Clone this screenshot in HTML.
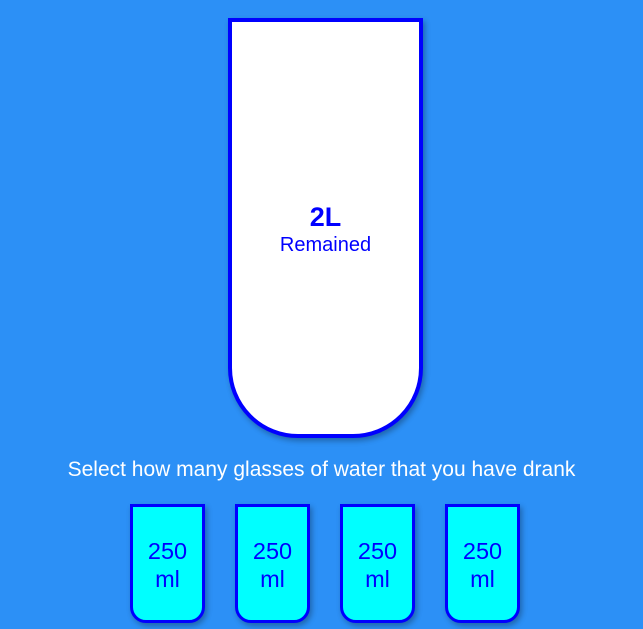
<!DOCTYPE html>
<html><head><style>
html,body{margin:0;padding:0}
body{width:643px;height:629px;background:#2c90f6;font-family:"Liberation Sans",Arial,sans-serif;position:relative;overflow:hidden}
.big{position:absolute;left:228px;top:18px;width:187px;height:412px;border:4px solid #0000ff;background:#fff;border-radius:0 0 70px 70px;box-shadow:2px 3px 6px rgba(0,0,0,0.3);color:#0000ff;text-align:center}
.big .l{position:absolute;top:180px;left:0;right:0;font-size:27px;font-weight:bold}
.big .r{position:absolute;top:212px;left:0;right:0;font-size:20px}
.txt{position:absolute;top:458px;left:0;right:0;text-align:center;color:#fff;font-size:21px}
.c{position:absolute;top:504px;width:69px;height:113px;border:3px solid #0000ff;background:#00ffff;border-radius:0 0 16px 16px;box-shadow:2px 3px 6px rgba(0,0,0,0.3);color:#0000ff;text-align:center;font-size:23.5px;line-height:28px;box-sizing:content-box}
.c span{position:absolute;top:30px;left:0;right:0}
</style></head><body>
<div class="big"><div class="l">2L</div><div class="r">Remained</div></div>
<div class="txt">Select how many glasses of water that you have drank</div>
<div class="c" style="left:130px"><span>250<br>ml</span></div>
<div class="c" style="left:235px"><span>250<br>ml</span></div>
<div class="c" style="left:340px"><span>250<br>ml</span></div>
<div class="c" style="left:445px"><span>250<br>ml</span></div>
</body></html>
